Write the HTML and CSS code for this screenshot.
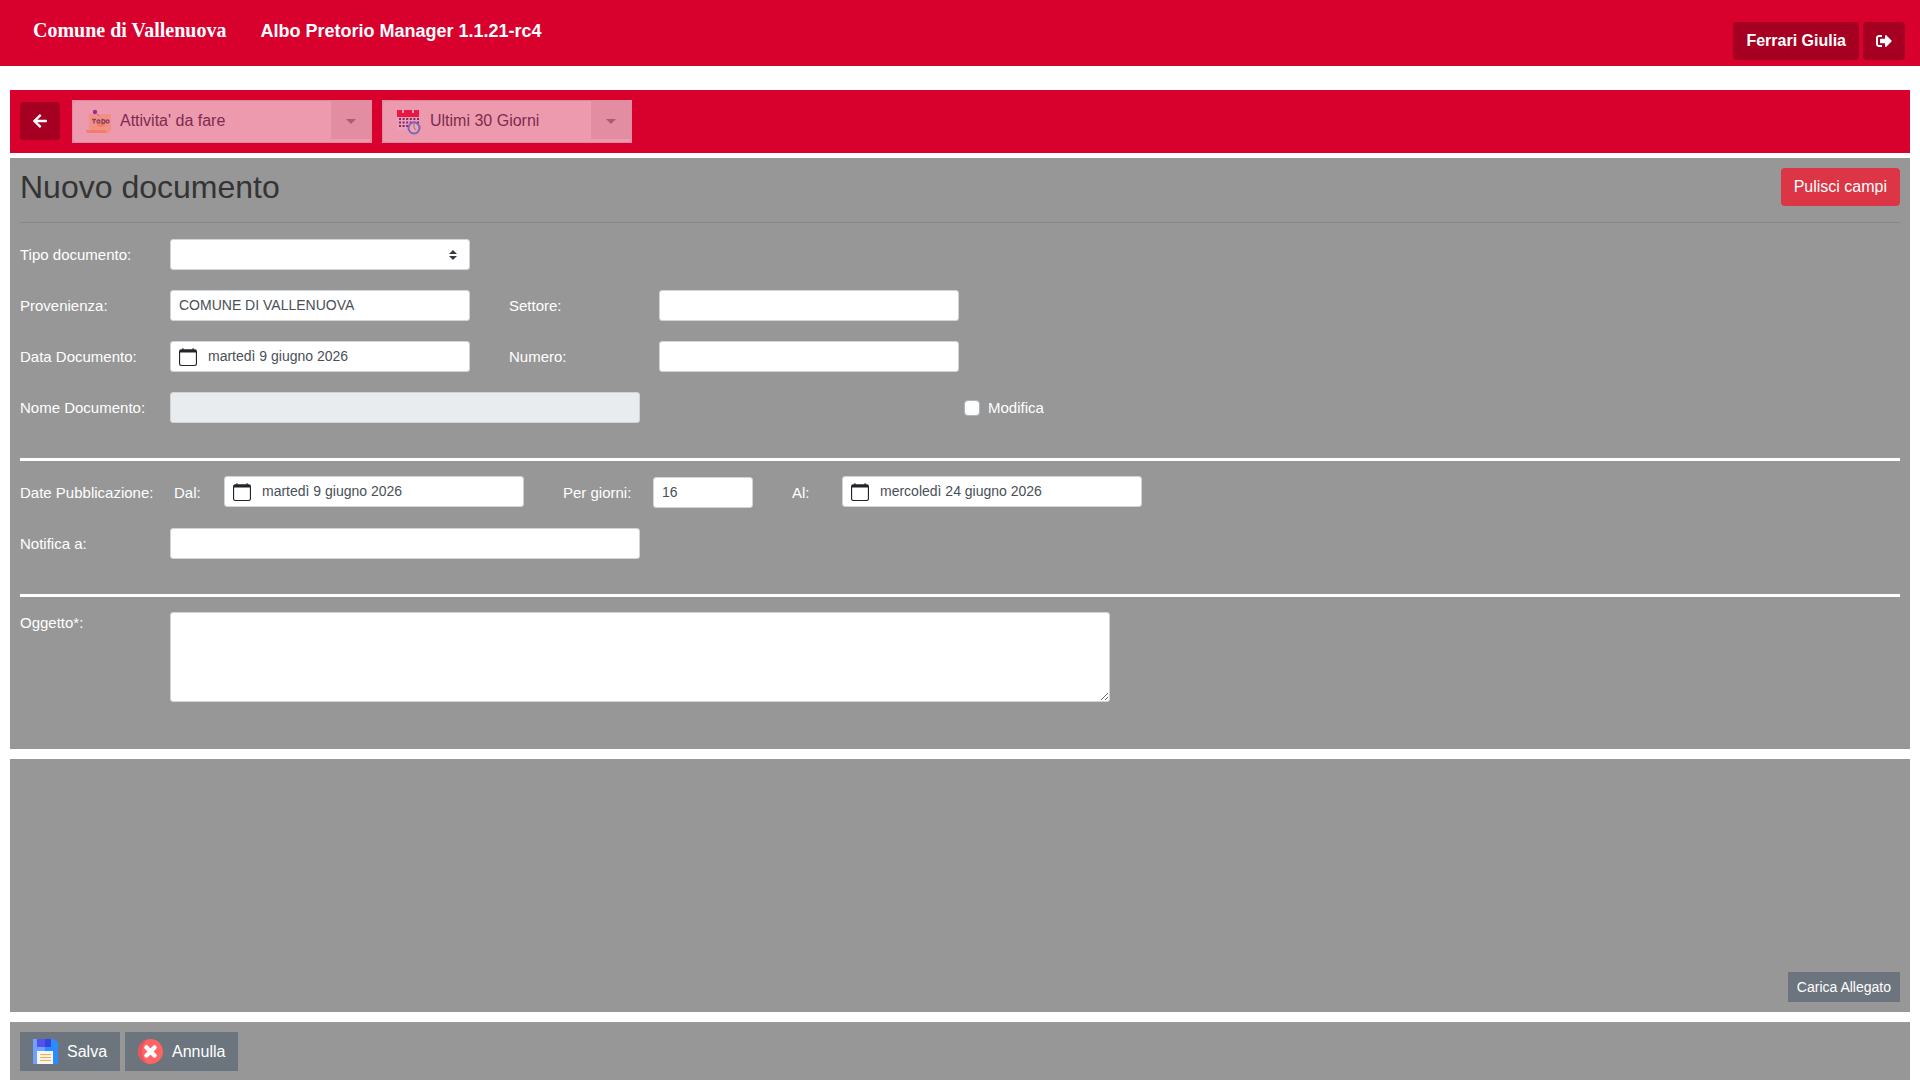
FILE: index.html
```html
<!DOCTYPE html>
<html lang="it">
<head>
  <meta charset="UTF-8">
  <meta name="viewport" content="width=device-width, initial-scale=1.0">
  <title>Albo Pretorio Manager</title>
  <link rel="stylesheet" href="styles.css">
</head>
<body>
  <header class="topbar">
    <span class="brand">Comune di Vallenuova</span>
    <h1 class="app-name">Albo Pretorio Manager 1.1.21-rc4</h1>
    <div class="user-actions">
      <button type="button" class="btn btn-dark-red btn-user">Ferrari Giulia</button>
      <button type="button" class="btn btn-dark-red" aria-label="Esci">
        <svg width="16" height="16" viewBox="0 0 512 512" fill="currentColor"><path d="M497 273L329 441c-15 15-41 4.500-41-17v-96H152c-13.300 0-24-10.700-24-24v-96c0-13.300 10.700-24 24-24h136V88c0-21.400 25.900-32 41-17l168 168c9.300 9.400 9.300 24.600 0 34zM192 436v-40c0-6.600-5.400-12-12-12H96c-17.700 0-32-14.300-32-32V160c0-17.700 14.300-32 32-32h84c6.600 0 12-5.400 12-12V76c0-6.600-5.400-12-12-12H96c-53 0-96 43-96 96v192c0 53 43 96 96 96h84c6.600 0 12-5.400 12-12z"/></svg>
      </button>
    </div>
  </header>

  <nav class="toolbar">
    <button type="button" class="btn btn-dark-red btn-back" aria-label="Indietro">
      <svg width="14" height="16" viewBox="0 0 448 512" fill="currentColor"><path d="M257.500 445.100l-22.200 22.200c-9.400 9.400-24.600 9.400-33.900 0L7 273c-9.400-9.400-9.400-24.600 0-33.900L201.400 44.700c9.400-9.400 24.600-9.400 33.900 0l22.200 22.200c9.500 9.500 9.300 25-.4 34.300L136.600 216H424c13.300 0 24 10.700 24 24v32c0 13.300-10.700 24-24 24H136.600l120.500 114.800c9.800 9.300 10 24.800.4 34.300z"/></svg>
    </button>
    <div class="filter filter-activity">
      <svg class="filter-icon" width="26" height="26" viewBox="0 0 26 26">
        <path d="M3 5h22v17a3 3 0 0 1-3 2H3z" fill="#f09086"/>
        <path d="M0 21h20q0 3 3 3H3q-3 0-3-3z" fill="#ee7f68"/>
        <path d="M10 14h10l-2 4h-6z" fill="#f0805f"/>
        <circle cx="9" cy="3" r="2.200" fill="#a02a94"/>
        <path d="M10 4l3 3" stroke="#c85c94"/>
        <g fill="none" stroke="#8f3f61" stroke-width="1.300">
          <path d="M6 10.500h4M8 10.500v4"/>
          <circle cx="12.500" cy="12.500" r="1.500"/>
          <path d="M16 10.500v4q3 0 3-2t-3-2z"/>
          <circle cx="21.500" cy="12.500" r="1.500"/>
        </g>
      </svg>
      <select aria-label="Attivita'">
        <option>Attivita' da fare</option>
      </select>
      <span class="filter-caret"></span>
    </div>
    <div class="filter filter-period">
      <svg class="filter-icon" width="26" height="26" viewBox="0 0 26 26">
        <path d="M1 7h22v14H1z" fill="#e9a0bd"/>
        <path d="M1 1h22v7H1z" fill="#ea1741"/>
        <path d="M7 0v4M17 0v4" stroke="#dda2b7" stroke-width="2"/>
        <path d="M3 10h20M3 13.500h20M3 17h10" stroke="#84295e" stroke-width="1.800" stroke-dasharray="2 1.600"/>
        <circle cx="18" cy="19" r="5.500" fill="#e5a9bf" stroke="#7f62b5" stroke-width="2"/>
        <path d="M18 15v4l2 2" fill="none" stroke="#dd7166" stroke-width="1.400"/>
      </svg>
      <select aria-label="Periodo">
        <option>Ultimi 30 Giorni</option>
      </select>
      <span class="filter-caret"></span>
    </div>
  </nav>

  <!-- calendar glyph shared by the date fields -->
  <svg class="sprite" aria-hidden="true">
    <symbol id="calendar" viewBox="0 0 16 16">
      <path d="M3.500 0a.5.5 0 0 1 .5.5V1h8V.5a.5.5 0 0 1 1 0V1h1a2 2 0 0 1 2 2v11a2 2 0 0 1-2 2H2a2 2 0 0 1-2-2V3a2 2 0 0 1 2-2h1V.5a.5.5 0 0 1 .5-.5zM1 4v10a1 1 0 0 0 1 1h12a1 1 0 0 0 1-1V4H1z"/>
    </symbol>
  </svg>

  <form class="content">
    <section class="panel panel-document">
      <div class="panel-header">
        <h2>Nuovo documento</h2>
        <button type="reset" class="btn btn-danger">Pulisci campi</button>
      </div>
      <hr class="rule">

      <div class="rows">
        <div class="row">
          <label class="label" for="tipo">Tipo documento:</label>
          <select id="tipo" class="control w-std custom-select"><option></option></select>
        </div>
        <div class="row">
          <label class="label" for="provenienza">Provenienza:</label>
          <input type="text" id="provenienza" class="control w-std" value="COMUNE DI VALLENUOVA">
          <label class="label next" for="settore">Settore:</label>
          <input type="text" id="settore" class="control w-std">
        </div>
        <div class="row">
          <label class="label" for="data-doc">Data Documento:</label>
          <div class="control date w-std">
            <button type="button" aria-label="Apri calendario"><svg width="18" height="18"><use href="#calendar"/></svg></button>
            <input type="text" id="data-doc" value="martedì 9 giugno 2026">
          </div>
          <label class="label next" for="numero">Numero:</label>
          <input type="text" id="numero" class="control w-std">
        </div>
        <div class="row">
          <label class="label" for="nome">Nome Documento:</label>
          <div class="field-span">
            <input type="text" id="nome" class="control w-wide" disabled>
          </div>
          <div class="check">
            <input type="checkbox" id="modifica">
            <label for="modifica">Modifica</label>
          </div>
        </div>
      </div>

      <hr class="separator">

      <div class="rows">
        <div class="row row-dates">
          <span class="label">Date Pubblicazione:</span>
          <label class="label short" for="dal">Dal:</label>
          <div class="control date w-std">
            <button type="button" aria-label="Apri calendario"><svg width="18" height="18"><use href="#calendar"/></svg></button>
            <input type="text" id="dal" value="martedì 9 giugno 2026">
          </div>
          <label class="label medium next" for="giorni">Per giorni:</label>
          <input type="text" id="giorni" class="control w-days" value="16">
          <label class="label short next" for="al">Al:</label>
          <div class="control date w-std">
            <button type="button" aria-label="Apri calendario"><svg width="18" height="18"><use href="#calendar"/></svg></button>
            <input type="text" id="al" value="mercoledì 24 giugno 2026">
          </div>
        </div>
        <div class="row">
          <label class="label" for="notifica">Notifica a:</label>
          <input type="text" id="notifica" class="control w-wide">
        </div>
      </div>

      <hr class="separator">

      <div class="row row-top">
        <label class="label" for="oggetto">Oggetto*:</label>
        <textarea id="oggetto" class="control"></textarea>
      </div>
    </section>

    <section class="panel panel-attachments">
      <button type="button" class="btn btn-secondary btn-sm">Carica Allegato</button>
    </section>

    <section class="panel panel-actions">
      <button type="submit" class="btn btn-secondary btn-icon">
        <svg width="25" height="25" viewBox="0 0 25 25">
          <path d="M0 0h21l4 4v21H0z" fill="#2a8dff"/>
          <path d="M0 0h12v25H0z" fill="#70a1ff"/>
          <path d="M4 0h14v8H4z" fill="#3742e4"/>
          <path d="M4 0h8v8H4z" fill="#5352ed"/>
          <path d="M4 12h16v13H4z" fill="#f5f5f5"/>
          <path d="M7 15.500h11M7 18.500h11M7 21.500h11" stroke="#fbb034"/>
        </svg>
        Salva
      </button>
      <button type="button" class="btn btn-secondary btn-icon">
        <svg width="25" height="25" viewBox="0 0 25 25">
          <circle cx="12.500" cy="12.500" r="12.500" fill="#ff6464"/>
          <path d="M9 .5a12.500 12.500 0 0 0 0 24a17 17 0 0 1 0-24z" fill="#e9545d"/>
          <path d="M8.500 8.500l8 8M16.500 8.500l-8 8" stroke="#fff" stroke-width="4.500" stroke-linecap="round"/>
        </svg>
        Annulla
      </button>
    </section>
  </form>
</body>
</html>
```
FILE: styles.css
```css
* {
  box-sizing: border-box;
}
body {
  display: flex;
  flex-direction: column;
  min-height: 100vh;
  margin: 0;
  background-color: #fff;
  font-family: "Liberation Sans", Arial, sans-serif;
  font-size: 16px;
  line-height: 24px;
}
button, input, select, textarea {
  margin: 0;
  font-family: inherit;
}
svg {
  display: block;
}
.sprite {
  display: none;
}

/* Buttons */
.btn {
  padding: 6px 12px;
  border: 1px solid transparent;
  border-radius: 4px;
  color: #fff;
  font-size: 16px;
  line-height: 24px;
  cursor: pointer;
}
.btn-dark-red {
  display: flex;
  align-items: center;
  height: 38px;
  background-color: #a50021;
}
.btn-user {
  font-weight: bold;
}
.btn-danger {
  background-color: #dc3545;
}
.btn-secondary {
  border-radius: 0;
  background-color: #6c757d;
}
.btn-sm {
  padding: 4px 8px;
  font-size: 14px;
  line-height: 20px;
}
.btn-icon {
  display: flex;
  align-items: center;
  gap: 9px;
  height: 39px;
}

/* Header */
.topbar {
  display: flex;
  height: 66px;
  padding: 0 15px 0 33px;
  background-color: #d8002d;
  color: #fff;
  line-height: 60px;
}
.brand {
  font-family: "Liberation Serif", "Times New Roman", serif;
  font-size: 20px;
  font-weight: bold;
}
.app-name {
  margin: 0 0 0 34px;
  font-size: 18px;
  line-height: 62px;
}
.user-actions {
  display: flex;
  gap: 4px;
  margin-left: auto;
  padding-top: 22px;
}

/* Toolbar */
.toolbar {
  display: flex;
  gap: 10px;
  margin: 24px 10px 5px;
  padding: 10px;
  background-color: #d8002d;
}
.btn-back {
  margin: 2px 2px 0 0;
}
.filter {
  position: relative;
  height: 43px;
  background-color: #e290a4;
}
.filter-activity {
  width: 300px;
}
.filter-period {
  width: 250px;
}
.filter select {
  width: 100%;
  height: 43px;
  padding: 0 44px 2px 47px;
  border: 1px solid #dc8a9e;
  border-radius: 5px;
  appearance: none;
  background-color: #ee9aae;
  color: #7a2c4e;
  font-size: 16px;
}
.filter-icon {
  position: absolute;
  top: 9px;
  left: 14px;
  pointer-events: none;
}
.filter-caret {
  position: absolute;
  top: 1px;
  right: 1px;
  width: 40px;
  height: 38px;
  background-color: #e28da1;
  pointer-events: none;
}
.filter-caret::after {
  content: "";
  position: absolute;
  top: 18px;
  left: 15px;
  border: 5px solid transparent;
  border-top-color: #b25872;
  border-bottom: 0;
}

/* Panels */
.content {
  display: flex;
  flex: 1;
  flex-direction: column;
  gap: 10px;
  margin: 0 10px;
}
.panel {
  padding: 10px;
  background-color: #979797;
}
.panel-document {
  padding-bottom: 47px;
}
.panel-header {
  display: flex;
  justify-content: space-between;
  height: 38px;
}
.panel-header h2 {
  margin: 0;
  color: #343434;
  font-size: 32px;
  font-weight: normal;
  line-height: 38px;
}
.panel-attachments {
  display: flex;
  flex: 1;
  align-items: flex-end;
  justify-content: flex-end;
}
.panel-actions {
  display: flex;
  gap: 5px;
  padding-bottom: 9px;
}
.rule {
  margin: 16px 0;
  border: 0;
  border-top: 1px solid #878787;
}
.separator {
  height: 3px;
  margin: 35px 0 15px;
  border: 0;
  background-color: #fff;
}

/* Form rows */
.rows {
  display: flex;
  flex-direction: column;
  gap: 20px;
}
.row {
  display: flex;
  align-items: center;
}
.row-dates {
  align-items: flex-end;
  height: 32px;
}
.row-dates .label {
  line-height: 30px;
}
.row-dates .date {
  align-self: flex-start;
}
.row-top {
  align-items: flex-start;
}
.label {
  width: 150px;
  color: #fff;
  font-size: 15px;
  line-height: 22px;
}
.label.short {
  width: 50px;
}
.label.medium {
  width: 90px;
}
.label + .label.short {
  margin-left: 4px;
}
.next {
  margin-left: 39px;
}
.control {
  height: 31px;
  padding: 3px 8px 5px;
  border: 1px solid #ced4da;
  border-radius: 3px;
  background-color: #fff;
  color: #495057;
  font-size: 14px;
}
.control:disabled {
  background-color: #e9ecef;
}
.w-std {
  width: 300px;
}
.w-wide {
  width: 470px;
}
.w-days {
  width: 100px;
}
.field-span {
  display: flex;
  width: 789px;
}
.custom-select {
  appearance: none;
  background: #fff url("data:image/svg+xml,%3csvg xmlns='http://www.w3.org/2000/svg' width='4' height='5' viewBox='0 0 4 5'%3e%3cpath fill='%23343a40' d='M2 0L0 2h4zm0 5L0 3h4z'/%3e%3c/svg%3e") no-repeat right 12px center / 8px 10px;
}
.date {
  display: flex;
  align-items: center;
  padding: 0 8px;
}
.date button {
  padding: 0;
  border: 0;
  background: none;
  color: #212529;
  fill: currentColor;
  cursor: pointer;
}
.date input {
  flex: 1;
  min-width: 0;
  margin-left: 11px;
  padding: 0 0 2px;
  border: 0;
  background: none;
  color: #495057;
  font-size: 14px;
}
.check {
  display: flex;
  align-items: center;
  gap: 8px;
  margin-left: 5px;
  color: #fff;
  font-size: 15px;
}
.check input {
  width: 16px;
  height: 16px;
  border: 1px solid #adb5bd;
  border-radius: 4px;
  appearance: none;
  background-color: #fff;
}
.check input:checked {
  border-color: #007bff;
  background-color: #007bff;
}
textarea.control {
  width: 940px;
  height: 90px;
}
```
